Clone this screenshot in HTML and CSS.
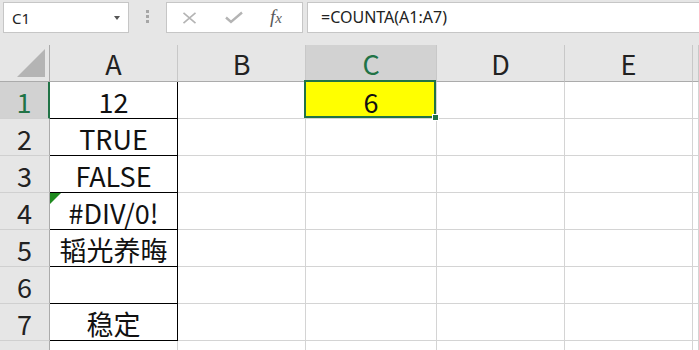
FILE: index.html
```html
<!DOCTYPE html>
<html>
  <head>
    <meta charset="utf-8">
    <title>COUNTA</title>
    <meta name="viewport" content="width=device-width, initial-scale=1">
    <link rel="stylesheet" href="styles.css">
  </head>
  <body>
    <!-- formula bar -->
    <div class="toolbar">
      <div class="namebox">
        <span>C1</span>
        <span class="caret"></span>
      </div>
      <div class="grip"><i></i><i></i><i></i></div>
      <div class="fbuttons">
        <svg class="icon-x" width="15" height="12" viewBox="0 0 15 12">
          <path d="M1.5 0.8 L13.5 11.2 M13.5 0.8 L1.5 11.2" stroke="#b4b4b4" stroke-width="1.6" fill="none" />
        </svg>
        <svg class="icon-ok" width="18" height="13" viewBox="0 0 18 13">
          <path d="M1 6.5 L6 11 L17 1.5" stroke="#b4b4b4" stroke-width="2.4" fill="none" />
        </svg>
        <span class="fx"><i>f</i><i>x</i></span>
      </div>
      <div class="formula">=COUNTA(A1:A7)</div>
    </div>

    <!-- worksheet -->
    <div class="sheet">
      <div class="corner"><span class="tri"></span></div>
      <div class="colhead">A</div>
      <div class="colhead">B</div>
      <div class="colhead active">C</div>
      <div class="colhead">D</div>
      <div class="colhead">E</div>
      <div class="colhead"></div>

      <div class="rowhead active">1</div>
      <div class="cell boxed">12</div>
      <div class="cell"></div>
      <div class="cell selected">6<span class="handle"></span></div>
      <div class="cell"></div>
      <div class="cell"></div>
      <div class="cell"></div>

      <div class="rowhead">2</div>
      <div class="cell boxed">TRUE</div>
      <div class="cell"></div>
      <div class="cell"></div>
      <div class="cell"></div>
      <div class="cell"></div>
      <div class="cell"></div>

      <div class="rowhead">3</div>
      <div class="cell boxed">FALSE</div>
      <div class="cell"></div>
      <div class="cell"></div>
      <div class="cell"></div>
      <div class="cell"></div>
      <div class="cell"></div>

      <div class="rowhead">4</div>
      <div class="cell boxed error">#DIV/0!</div>
      <div class="cell"></div>
      <div class="cell"></div>
      <div class="cell"></div>
      <div class="cell"></div>
      <div class="cell"></div>

      <div class="rowhead">5</div>
      <div class="cell boxed">韬光养晦</div>
      <div class="cell"></div>
      <div class="cell"></div>
      <div class="cell"></div>
      <div class="cell"></div>
      <div class="cell"></div>

      <div class="rowhead">6</div>
      <div class="cell boxed"></div>
      <div class="cell"></div>
      <div class="cell"></div>
      <div class="cell"></div>
      <div class="cell"></div>
      <div class="cell"></div>

      <div class="rowhead">7</div>
      <div class="cell boxed">稳定</div>
      <div class="cell"></div>
      <div class="cell"></div>
      <div class="cell"></div>
      <div class="cell"></div>
      <div class="cell"></div>

      <div class="rowhead"></div>
      <div class="cell"></div>
      <div class="cell"></div>
      <div class="cell"></div>
      <div class="cell"></div>
      <div class="cell"></div>
      <div class="cell"></div>
    </div>
  </body>
</html>
```

FILE: styles.css
```css
body {
  margin: 0;
  background: #e6e6e6;
  overflow: hidden;
  font-family: "Noto Sans", "Open Sans", sans-serif;
}

/* formula bar */

.toolbar {
  display: flex;
  height: 45px;
  padding-top: 2px;
  box-sizing: border-box;
  overflow: hidden;
}

.namebox,
.fbuttons,
.formula {
  height: 31px;
  box-sizing: border-box;
  background: #fff;
  border: 1px solid #c6c6c6;
  display: flex;
  align-items: center;
  font-size: 15px;
  color: #222;
}

.namebox {
  width: 126px;
  margin-left: 3px;
  padding-left: 8px;
  justify-content: space-between;
  padding-right: 8px;
}

.caret {
  width: 0;
  height: 0;
  border-left: 3.5px solid transparent;
  border-right: 3.5px solid transparent;
  border-top: 4px solid #555;
}

.grip {
  width: 37px;
  display: flex;
  flex-direction: column;
  align-items: center;
  gap: 2px;
  padding-top: 8px;
  box-sizing: border-box;
}

.grip i {
  width: 3px;
  height: 3px;
  background: #a6a6a6;
}

.fbuttons {
  width: 137px;
  padding-left: 15px;
}

.icon-ok {
  margin-left: 28px;
}

.fx {
  margin-left: 27px;
  font-family: "Liberation Serif", serif;
  color: #595959;
  font-size: 19px;
  margin-top: -2px;
}

.fx i:last-child {
  font-size: 15px;
}

.formula {
  flex: 1;
  margin-left: 4px;
  margin-right: -2px;
  padding-left: 13px;
  padding-bottom: 1px;
  font-size: 16px;
}

/* worksheet */

.sheet {
  display: grid;
  grid-template-columns: 50px 128px 128px 131px 128px 128px 1fr;
  grid-template-rows: 37px;
  grid-auto-rows: 37px;
  background: #fff;
  font-family: "Noto Sans CJK SC", "Noto Sans", sans-serif;
  font-size: 27px;
  line-height: 1;
  color: #111;
}

.corner,
.colhead,
.rowhead,
.cell {
  box-sizing: border-box;
  display: flex;
  align-items: center;
  justify-content: center;
  padding-top: 2px;
}

.corner {
  background: #e6e6e6;
  border-right: 1px solid #ababab;
  border-bottom: 1px solid #ababab;
  align-items: flex-end;
  justify-content: flex-end;
  padding: 0 4px 4px 0;
}

.tri {
  width: 0;
  height: 0;
  border-left: 28px solid transparent;
  border-bottom: 28px solid #b4b4b4;
}

.colhead {
  background: #e6e6e6;
  border-right: 1px solid #c8c8c8;
  border-bottom: 1px solid #ababab;
  color: #222;
  padding-top: 1px;
}

.rowhead {
  background: #e6e6e6;
  border-right: 1px solid #ababab;
  border-bottom: 1px solid #d0d0d0;
  color: #222;
}

.colhead.active,
.rowhead.active {
  background: #d2d2d2;
  color: #217346;
}

.rowhead.active {
  border-right: 2px solid #217346;
}

.cell {
  border-right: 1px solid #d4d4d4;
  border-bottom: 1px solid #d4d4d4;
  position: relative;
}

.cell.boxed {
  border-right-color: #000;
  border-bottom-color: #000;
}

.cell.error::before {
  content: "";
  position: absolute;
  top: 0;
  left: 0;
  border-top: 11px solid #1f8a1f;
  border-right: 11px solid transparent;
}

.cell.selected {
  background: #ffff00;
}

.cell.selected::after {
  content: "";
  position: absolute;
  top: -2px;
  left: -2px;
  right: 0;
  bottom: 0;
  border: 2px solid #217346;
}

.handle {
  position: absolute;
  right: -3px;
  bottom: -3px;
  width: 5px;
  height: 5px;
  background: #217346;
  border: 1px solid #fff;
  z-index: 1;
}
```
